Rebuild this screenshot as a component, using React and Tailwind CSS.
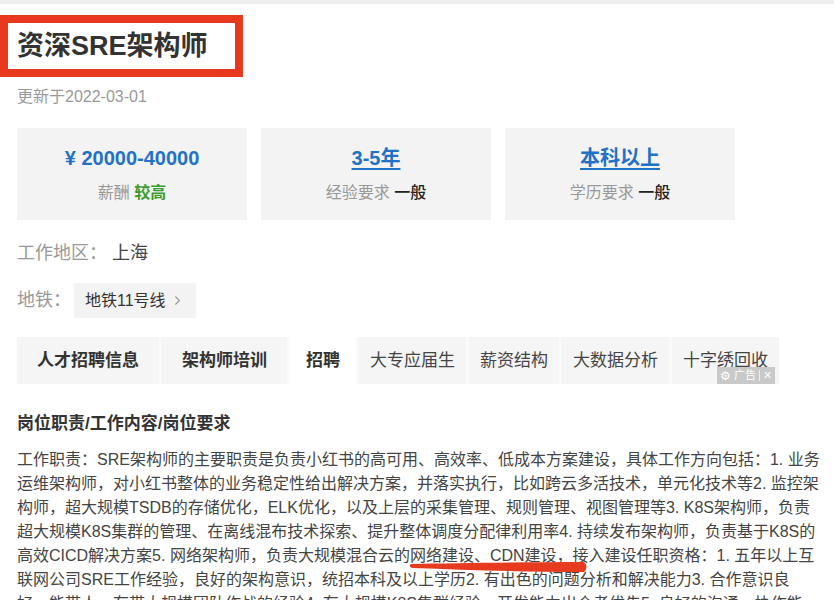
import { ChevronRight } from "lucide-react"

const font = { fontFamily: '"Liberation Sans", "Noto Sans CJK SC", sans-serif' }

const lines = [
  "工作职责：SRE架构师的主要职责是负责小红书的高可用、高效率、低成本方案建设，具体工作方向包括：1. 业务",
  "运维架构师，对小红书整体的业务稳定性给出解决方案，并落实执行，比如跨云多活技术，单元化技术等2. 监控架",
  "构师，超大规模TSDB的存储优化，ELK优化，以及上层的采集管理、规则管理、视图管理等3. K8S架构师，负责",
  "超大规模K8S集群的管理、在离线混布技术探索、提升整体调度分配律利用率4. 持续发布架构师，负责基于K8S的",
  "高效CICD解决方案5. 网络架构师，负责大规模混合云的网络建设、CDN建设，接入建设任职资格：1. 五年以上互",
  "联网公司SRE工作经验，良好的架构意识，统招本科及以上学历2. 有出色的问题分析和解决能力3. 合作意识良",
  "好，能带人，有带大规模团队作战的经验4. 有大规模K8S集群经验，开发能力出众者优先5. 良好的沟通、协作能",
]

const tabs = [
  { name: "人才招聘信息", bold: true, pad: "px-5" },
  { name: "架构师培训", bold: true, pad: "px-5" },
  { name: "招聘", bold: true, pad: "px-4", active: true },
  { name: "大专应届生", pad: "px-[11px]" },
  { name: "薪资结构", pad: "px-[11px]" },
  { name: "大数据分析", pad: "px-[11px]" },
  { name: "十字绣回收", pad: "px-[11px]" },
]

export default function App() {
  return (
    <div className="relative w-[834px] h-[600px] overflow-hidden bg-white border-t-4 border-[#efefef] text-[#333]" style={font}>

      {/* Title, boxed */}
      <div className="mt-[11px] w-[243px] h-[62px] border-8 border-[#e8391e] flex items-center pl-[9px]">
        <h1 className="text-[27px] font-bold leading-none text-[#333]">资深SRE架构师</h1>
      </div>

      <div className="px-[17px]">
        <p className="mt-[10px] text-[16px] leading-5 text-[#999]">更新于2022-03-01</p>

        {/* Summary cards */}
        <div className="mt-[21px] flex gap-[14px]">
          <Card value="¥ 20000-40000" label="薪酬" level="较高" green />
          <Card value="3-5年" label="经验要求" level="一般" link />
          <Card value="本科以上" label="学历要求" level="一般" link />
        </div>

        <div className="mt-[21px] flex items-center text-[18px] leading-6">
          <span className="text-[#999] w-[95px]">工作地区：</span>
          <span className="text-[#444]">上海</span>
        </div>

        <div className="mt-[18px] flex items-center">
          <span className="text-[18px] text-[#999] w-[57px]">地铁：</span>
          <div className="h-[35px] px-[11px] bg-[#f3f3f3] flex items-center gap-1 text-[16px] text-[#333]">
            地铁11号线
            <ChevronRight size={15} strokeWidth={1.8} className="text-[#999]" />
          </div>
        </div>

        {/* Tabs */}
        <div className="relative mt-[19px] flex h-[47px] w-[758px] bg-[#fafafa]">
          {tabs.map((t, i) => (
            <div
              key={t.name}
              className={`${t.pad} ${i > 0 ? "ml-[3px]" : ""} flex items-center text-[17px] whitespace-nowrap ${t.active ? "bg-white" : "bg-[#f5f5f5]"} ${t.bold ? "font-bold text-[#333]" : "text-[#444]"}`}
            >
              {t.name}
            </div>
          ))}
          <div className="absolute right-0 bottom-0 h-[17px] w-[58px] bg-[#c9c9c9] text-white text-[11px] flex items-center justify-center gap-[3px] leading-none">
            <span className="text-[12px]">⚙</span>
            <span>广告</span>
            <span className="h-[11px] w-px bg-white/70" />
            <span>✕</span>
          </div>
        </div>

        <h2 className="mt-[28px] text-[17px] leading-6 font-bold text-[#333]">岗位职责/工作内容/岗位要求</h2>

        <div className="mt-[12px] text-[16px] leading-6 text-[#444]">
          {lines.map((l) => (
            <div key={l} className="whitespace-nowrap">{l}</div>
          ))}
        </div>
      </div>

      {/* red marker stroke */}
      <svg className="absolute left-[408px] top-[555px]" width="182" height="16" viewBox="0 0 182 16">
        <path d="M3 5 C50 4 120 3 176 3 Q181 8 176 13 C120 13 60 11 4 9 Q0 7 3 5 Z" fill="#e63b1f" />
      </svg>
    </div>
  )
}

function Card({ value, label, level, green, link }) {
  return (
    <div className="w-[230px] h-[92px] bg-[#f3f3f3] flex flex-col items-center pt-[16px]">
      <div className={`text-[20px] leading-7 font-bold text-[#1f72c6] ${link ? "underline underline-offset-[3px]" : ""}`}>
        {value}
      </div>
      <div className="mt-[10px] text-[16px] leading-[22px]">
        <span className="text-[#999]">{label}</span>{" "}
        <span className={green ? "font-bold text-[#3c9b2f]" : "font-medium text-[#222]"}>{level}</span>
      </div>
    </div>
  )
}
